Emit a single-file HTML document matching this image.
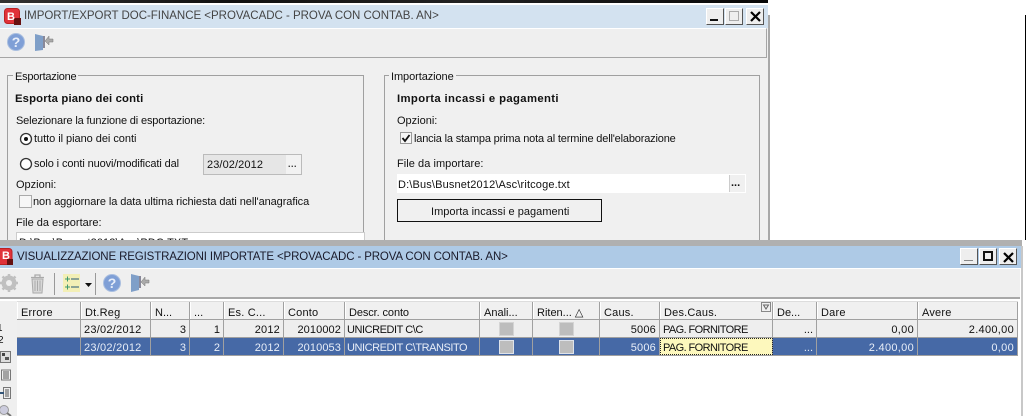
<!DOCTYPE html>
<html><head><meta charset="utf-8">
<style>
html,body{margin:0;padding:0;background:#fff}
#r{position:relative;width:1026px;height:416px;overflow:hidden;background:#fff;font-family:"Liberation Sans",sans-serif;font-size:11px;color:#111}
#r div,#r span.a,#r svg{position:absolute}
.t{white-space:nowrap;line-height:13px}
.bd{border:1px solid #a0a0a0;box-sizing:border-box}
.wb{box-sizing:border-box;background:#eee;border:1px solid #fff;border-right-color:#555;border-bottom-color:#555;width:18px;height:17px;font-weight:bold;text-align:center}
.c{position:absolute;box-sizing:border-box;border-right:1px solid #a0a0a0;height:100%;padding:0 3px;white-space:nowrap;line-height:21px;overflow:hidden}
.h{background:#f0f0f0;border-left:1px solid #fff}
.n{text-align:right}
.cb{position:absolute;display:block;left:50%;top:2px;margin-left:-7px;width:15px;height:14px;box-sizing:border-box;background:#bdbdbd;border:1px solid #d4d4d4}
.sel .cb{border-color:#dfe3ea}
.sel{background:#4669a6;color:#e8eef8}
.row1{background:#eee}
.uc{letter-spacing:-.45px}
.pf{letter-spacing:-.6px}
</style></head><body><div id="r">
<!-- top strip -->
<div style="left:0;top:0;width:768px;height:3px;background:linear-gradient(90deg,#333,#111 30%,#222 60%,#080808)"></div>
<div style="left:1025px;top:15px;width:1px;height:225px;background:#000"></div>
<!-- window 1 -->
<div style="left:0;top:5px;width:768px;height:235px;background:#f0f0f0"></div>
<div style="left:0;top:5px;width:768px;height:23px;background:#d3e2f0"></div>
<div style="left:768px;top:15px;width:2px;height:225px;background:#a8a8a8"></div>
<svg style="left:4px;top:8px" width="17" height="17" viewBox="0 0 17 17"><rect x=".5" y=".5" width="15" height="15" rx="3" fill="#e0323a" stroke="#b22"/><rect x="10" y="10" width="7" height="7" fill="#611"/></svg>
<div class="t" style="left:7px;top:11px;color:#fff;font-weight:bold;font-size:11px">B</div>
<div class="t" style="left:24px;top:10px;font-size:11.5px;color:#444;letter-spacing:-.02px">IMPORT/EXPORT DOC-FINANCE &lt;PROVACADC - PROVA CON CONTAB. AN&gt;</div>
<div class="wb" style="left:706px;top:8px"></div><div style="left:710px;top:19px;width:8px;height:2px;background:#111"></div>
<div class="wb" style="left:725px;top:8px"></div><div class="bd" style="left:729px;top:11px;width:10px;height:10px;border-color:#aaa"></div>
<div class="wb" style="left:746px;top:8px"></div>
<svg style="left:750px;top:11px" width="11" height="11"><path d="M1 1L10 10M10 1L1 10" stroke="#000" stroke-width="2.2"/></svg>
<div style="left:0;top:28px;width:767px;height:30px;box-sizing:border-box;background:#efefef;border-top:1px solid #fff;border-bottom:1px solid #a5a5a5;border-right:1px solid #a5a5a5"></div>
<svg style="left:7px;top:33px" width="18" height="18"><circle cx="9" cy="9" r="8.5" fill="#7f9fd6" stroke="#a9bedf"/><text x="9" y="14" font-family="Liberation Sans" font-size="14" font-weight="bold" fill="#e8eefa" text-anchor="middle">?</text></svg>
<svg style="left:34px;top:33px" width="21" height="19"><path d="M1 1L9 3V17L1 18Z" fill="#7f9fc8"/><path d="M9 3H11V15H9Z" fill="#889"/><path d="M19 6H15V3L11 8L15 12V9H19Z" fill="#aaa" stroke="#777" stroke-width=".5"/></svg>
<!-- esportazione -->
<div class="bd" style="left:7px;top:75px;width:357px;height:175px"></div>
<div class="t" style="left:13px;top:71px;background:#f0f0f0;padding:0 2px;font-size:11px;letter-spacing:-.23px">Esportazione</div>
<div class="t" style="left:15px;top:93px;font-weight:bold;letter-spacing:.15px;font-size:11.3px">Esporta piano dei conti</div>
<div class="t" style="left:16px;top:115px;font-size:11px;letter-spacing:-.15px">Selezionare la funzione di esportazione:</div>
<svg style="left:19px;top:132px" width="14" height="14"><circle cx="7" cy="7" r="5.5" fill="#fff" stroke="#333" stroke-width="1.3"/><circle cx="7" cy="7" r="2" fill="#111"/></svg>
<div class="t" style="left:34px;top:133px;letter-spacing:-.04px">tutto il piano dei conti</div>
<svg style="left:19px;top:157px" width="14" height="14"><circle cx="7" cy="7" r="5.5" fill="#fff" stroke="#333" stroke-width="1.3"/></svg>
<div class="t" style="left:34px;top:158px;letter-spacing:-.11px">solo i conti nuovi/modificati dal</div>
<div style="left:203px;top:154px;width:99px;height:21px;box-sizing:border-box;background:#e6e6e6;border:1px solid #bbb"></div>
<div class="t" style="left:207px;top:159px;letter-spacing:.1px">23/02/2012</div>
<div style="left:286px;top:155px;width:15px;height:19px;background:#f2f2f2"></div>
<div class="t" style="left:288px;top:158px;color:#333;font-weight:bold;letter-spacing:.5px;font-size:9px">...</div>
<div class="t" style="left:16px;top:179px">Opzioni:</div>
<div style="left:19px;top:195px;width:13px;height:13px;box-sizing:border-box;background:#f6f6f6;border:1px solid #aaa"></div>
<div class="t" style="left:33px;top:196px;letter-spacing:-.08px">non aggiornare la data ultima richiesta dati nell'anagrafica</div>
<div class="t" style="left:16px;top:217px">File da esportare:</div>
<div style="left:16px;top:232px;width:349px;height:10px;background:#fff;border:1px solid #ccc;box-sizing:border-box"></div>
<div class="t" style="left:19px;top:237px;letter-spacing:.1px">D:\Bus\Busnet2012\Asc\PDC.TXT</div>
<!-- importazione -->
<div class="bd" style="left:384px;top:75px;width:376px;height:175px"></div>
<div class="t" style="left:389px;top:71px;background:#f0f0f0;padding:0 2px;letter-spacing:-.08px">Importazione</div>
<div class="t" style="left:397px;top:93px;font-weight:bold;letter-spacing:.37px;font-size:11.3px">Importa incassi e pagamenti</div>
<div class="t" style="left:397px;top:115px">Opzioni:</div>
<div style="left:400px;top:132px;width:12px;height:12px;box-sizing:border-box;background:#f6f6f6;border:1px solid #999"></div>
<svg style="left:400px;top:132px" width="12" height="12"><path d="M2.5 6L5 9L9.5 3" stroke="#111" stroke-width="1.8" fill="none"/></svg>
<div class="t" style="left:414px;top:133px;letter-spacing:-.17px">lancia la stampa prima nota al termine dell'elaborazione</div>
<div class="t" style="left:397px;top:158px;letter-spacing:.05px">File da importare:</div>
<div style="left:397px;top:174px;width:349px;height:19px;background:#fff"></div>
<div class="t" style="left:398px;top:179px;letter-spacing:.15px">D:\Bus\Busnet2012\Asc\ritcoge.txt</div>
<div style="left:729px;top:175px;width:16px;height:17px;background:#f0f0f0;border-left:1px solid #ccc;box-sizing:border-box"></div>
<div class="t" style="left:731px;top:177px;font-weight:bold;font-size:11px;color:#111">...</div>
<div style="left:397px;top:199px;width:205px;height:23px;box-sizing:border-box;background:#f0f0f0;border:1px solid #111"></div>
<div class="t" style="left:431px;top:206px;letter-spacing:.03px">Importa incassi e pagamenti</div>
<!-- window 2 -->
<div style="left:0;top:240px;width:1026px;height:176px;background:#fff"></div>
<div style="left:0;top:240px;width:1022px;height:6px;background:#b0b0b0"></div>
<div style="left:0;top:246px;width:1021px;height:22px;background:#aecae6"></div>
<div style="left:1021px;top:246px;width:2px;height:170px;background:#c8c8c8"></div>
<svg style="left:0;top:248px" width="14" height="18" viewBox="0 0 14 18"><rect x="-3" y=".5" width="15" height="16" rx="3" fill="#e0323a" stroke="#b22"/><rect x="7" y="11" width="6" height="6" fill="#611"/></svg>
<div class="t" style="left:2px;top:250px;color:#fff;font-weight:bold">B</div>
<div class="t" style="left:17px;top:251px;font-size:11.5px;color:#1a1a2a;letter-spacing:-.13px">VISUALIZZAZIONE REGISTRAZIONI IMPORTATE &lt;PROVACADC - PROVA CON CONTAB. AN&gt;</div>
<div class="wb" style="left:960px;top:248px"></div><div style="left:964px;top:260px;width:9px;height:1px;background:#888"></div>
<div class="wb" style="left:979px;top:248px"></div><div class="bd" style="left:983px;top:251px;width:10px;height:10px;border:2px solid #111"></div>
<div class="wb" style="left:999px;top:248px"></div>
<svg style="left:1003px;top:252px" width="11" height="11"><path d="M1 1L10 10M10 1L1 10" stroke="#000" stroke-width="2.2"/></svg>
<div style="left:0;top:268px;width:1020px;height:31px;box-sizing:border-box;background:#efefef;border-top:1px solid #fff;border-bottom:2px solid #a8a8a8"></div>
<svg style="left:0;top:274px" width="19" height="19"><circle cx="9" cy="9" r="5.5" fill="none" stroke="#c0c0c0" stroke-width="4"/><path d="M9 0V18M0 9H18M2.5 2.5L15.5 15.5M15.5 2.5L2.5 15.5" stroke="#c0c0c0" stroke-width="2.5"/><circle cx="9" cy="9" r="3" fill="#efefef"/></svg>
<svg style="left:30px;top:274px" width="15" height="20"><path d="M1 3.5H14M5 3V1H10V3" stroke="#aaa" fill="none" stroke-width="1.3"/><path d="M2 5H13L12 19H3Z" fill="#d8d8d8" stroke="#aaa"/><path d="M5 6.500V17M7.500 6.500V17M10 6.500V17" stroke="#aaa"/></svg>
<div style="left:54px;top:273px;width:1px;height:22px;background:#999"></div>
<svg style="left:63px;top:274px" width="17" height="18"><rect width="17" height="18" fill="#f3efb6"/><path d="M2 5H7M4.500 2.500V7.500M2 13H7M4.500 10.500V15.500" stroke="#3d9a70" stroke-width="1"/><path d="M8 5H16M8 13H16" stroke="#6a8a8a" stroke-width="1.500"/></svg>
<svg style="left:85px;top:283px" width="7" height="4"><path d="M0 0H7L3.500 4Z" fill="#111"/></svg>
<div style="left:95px;top:273px;width:1px;height:22px;background:#999"></div>
<svg style="left:103px;top:273px" width="18" height="20"><circle cx="9" cy="10" r="8.500" fill="#7f9fd6" stroke="#a9bedf"/><text x="9" y="15" font-family="Liberation Sans" font-size="14" font-weight="bold" fill="#e8eefa" text-anchor="middle">?</text></svg>
<svg style="left:130px;top:273px" width="21" height="20"><path d="M1 1L9 3V17L1 19Z" fill="#7f9fc8"/><path d="M9 3H11V15H9Z" fill="#889"/><path d="M19 7H15V4L11 9L15 13V10H19Z" fill="#aaa" stroke="#777" stroke-width=".5"/></svg>
<!-- side column -->
<div style="left:0;top:301px;width:17px;height:115px;background:#efefef"></div>
<div class="t" style="left:-3px;top:322px;font-size:10px">1</div>
<div class="t" style="left:-2px;top:334px;font-size:10px">2</div>
<svg style="left:0;top:346px" width="12" height="70"><rect x="0.500" y="5.500" width="10" height="11" fill="#ddd" stroke="#777"/><rect x="2" y="7" width="3" height="3" fill="#444"/><rect x="5" y="11" width="4" height="3" fill="#555"/><rect x="1.500" y="24" width="9" height="10" fill="#eee" stroke="#777"/><path d="M3 26H9M3 28H9M3 30H9M3 32H9" stroke="#555"/><rect x="3.500" y="41.500" width="7" height="11" fill="#eee" stroke="#777"/><path d="M0 47H4" stroke="#357" stroke-width="2"/><path d="M5 44H9M5 46H9M5 48H9M5 50H9" stroke="#555"/><circle cx="4" cy="64" r="4.500" fill="#ccd" stroke="#999"/><path d="M7 67L11 70" stroke="#777" stroke-width="2"/></svg>
<!-- grid header -->
<div style="left:17px;top:301px;width:1001px;height:19px;background:#f0f0f0;border-top:1px solid #ddd;border-bottom:1px solid #a0a0a0;box-sizing:border-box;font-size:11px">
<span class="c h" style="left:0;width:64px;line-height:22px;padding-left:3px;letter-spacing:.2px">Errore</span><span class="c h" style="left:64px;width:70px;line-height:22px;letter-spacing:.2px">Dt.Reg</span><span class="c h" style="left:134px;width:39px;line-height:22px">N...</span><span class="c h" style="left:173px;width:34px;line-height:22px">...</span><span class="c h" style="left:207px;width:60px;line-height:22px;letter-spacing:.2px">Es. C...</span><span class="c h" style="left:267px;width:61px;line-height:22px;letter-spacing:.2px">Conto</span><span class="c h" style="left:328px;width:135px;line-height:22px;letter-spacing:-.1px">Descr. conto</span><span class="c h" style="left:463px;width:53px;line-height:22px">Anali...</span><span class="c h" style="left:516px;width:67px;line-height:22px">Riten... <span style="font-size:11px">△</span></span><span class="c h" style="left:583px;width:60px;line-height:22px;letter-spacing:.2px">Caus.</span><span class="c h" style="left:643px;width:113px;line-height:22px;letter-spacing:.2px">Des.Caus.</span><span class="c h" style="left:756px;width:44px;line-height:22px">De...</span><span class="c h" style="left:800px;width:101px;line-height:22px;letter-spacing:.2px">Dare</span><span class="c h" style="left:901px;width:100px;line-height:22px;letter-spacing:.2px">Avere</span>
</div>
<svg style="left:761px;top:302px" width="10" height="10"><rect x=".5" y=".5" width="9" height="9" fill="#f0f0f0" stroke="#888"/><path d="M2.500 3H7.500L5 7Z" fill="none" stroke="#666"/></svg>
<!-- row 1 -->
<div class="row1" style="left:17px;top:320px;width:1001px;height:18px;border-bottom:1px solid #a0a0a0;box-sizing:border-box">
<span class="c" style="left:0;width:64px"></span><span class="c" style="left:64px;width:70px;letter-spacing:.25px">23/02/2012</span><span class="c n" style="left:134px;width:39px">3</span><span class="c n" style="left:173px;width:34px">1</span><span class="c n" style="left:207px;width:60px;letter-spacing:.2px">2012</span><span class="c n" style="left:267px;width:61px;letter-spacing:.1px">2010002</span><span class="c uc" style="left:328px;width:135px;padding-left:2px">UNICREDIT C\C</span><span class="c" style="left:463px;width:53px"><span class="cb"></span></span><span class="c" style="left:516px;width:67px"><span class="cb"></span></span><span class="c n" style="left:583px;width:60px;letter-spacing:.2px">5006</span><span class="c pf" style="left:643px;width:113px">PAG. FORNITORE</span><span class="c n" style="left:756px;width:44px">...</span><span class="c n" style="left:800px;width:101px;letter-spacing:.3px">0,00</span><span class="c n" style="left:901px;width:100px;letter-spacing:.3px">2.400,00</span>
</div>
<!-- row 2 -->
<div class="sel" style="left:17px;top:338px;width:1001px;height:18px;border-bottom:1px solid #a0a0a0;box-sizing:border-box">
<span class="c" style="left:0;width:64px"></span><span class="c" style="left:64px;width:70px;letter-spacing:.25px">23/02/2012</span><span class="c n" style="left:134px;width:39px">3</span><span class="c n" style="left:173px;width:34px">2</span><span class="c n" style="left:207px;width:60px;letter-spacing:.2px">2012</span><span class="c n" style="left:267px;width:61px;letter-spacing:.1px">2010053</span><span class="c uc" style="left:328px;width:135px;padding-left:2px">UNICREDIT C\TRANSITO</span><span class="c" style="left:463px;width:53px"><span class="cb"></span></span><span class="c" style="left:516px;width:67px"><span class="cb"></span></span><span class="c n" style="left:583px;width:60px;letter-spacing:.2px">5006</span><span class="c pf" style="left:643px;width:113px;background:#fdf8bd;color:#111;outline:1px dotted #222;outline-offset:-1px">PAG. FORNITORE</span><span class="c n" style="left:756px;width:44px">...</span><span class="c n" style="left:800px;width:101px;letter-spacing:.3px">2.400,00</span><span class="c n" style="left:901px;width:100px;letter-spacing:.3px">0,00</span>
</div>
</div></body></html>
